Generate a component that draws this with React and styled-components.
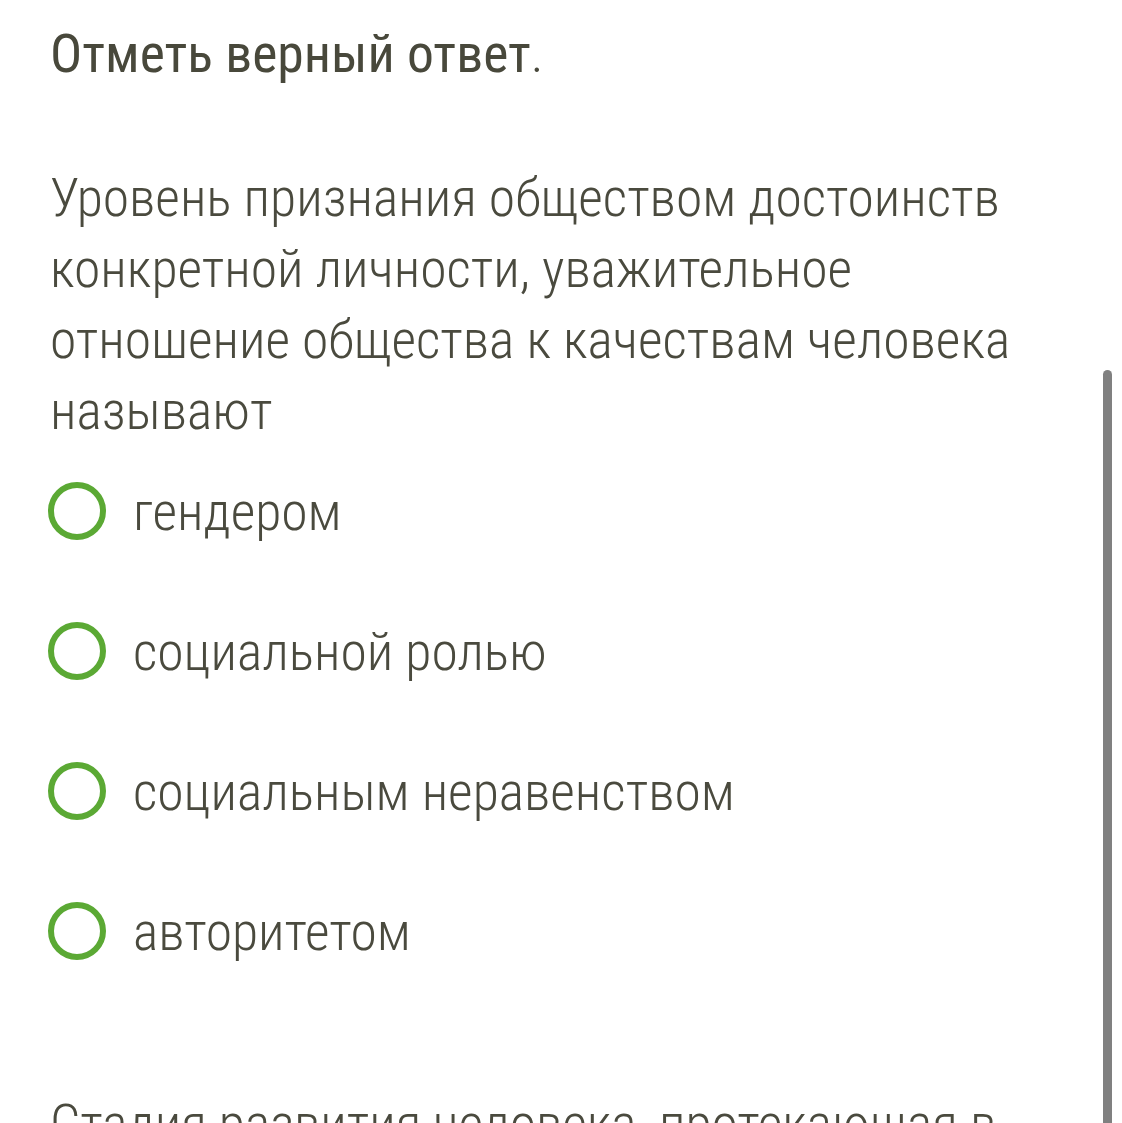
import React from "react";
import styled, { createGlobalStyle } from "styled-components";

const Global = createGlobalStyle`
  html, body { margin: 0; background: #fff; overflow: hidden; }
`;

const Page = styled.div`
  position: relative;
  height: 1123px;
  overflow: hidden;
  font-family: "Roboto Condensed", Roboto, "Liberation Sans", sans-serif;
  color: #4a4a3e;
`;

const Content = styled.div`
  padding: 22px 80px 0 50px;
`;

const Instruction = styled.div`
  font-size: 53.6px;
  line-height: 64px;
  font-weight: 400;
  color: #48483b;
  & span {
    font-weight: 300;
  }
`;

const Question = styled.div`
  margin-top: 76px;
  font-size: 53.6px;
  line-height: 71px;
  font-weight: 300;
`;

const Options = styled.div`
  margin-top: 36px;
  display: flex;
  flex-direction: column;
  gap: 82px;
`;

const Option = styled.label`
  display: flex;
  align-items: center;
  gap: 27px;
  height: 58px;
  font-size: 53.6px;
  font-weight: 300;
`;

const Radio = styled.span`
  flex: none;
  width: 58px;
  height: 58px;
  box-sizing: border-box;
  border-radius: 50%;
  border: 6px solid #5ba934;
  margin-left: -2px;
`;

const Next = styled.div`
  margin-top: 128px;
  font-size: 53.6px;
  line-height: 71px;
  font-weight: 300;
  white-space: nowrap;
`;

const Scrollbar = styled.div`
  position: absolute;
  left: 1103px;
  top: 370px;
  width: 9px;
  bottom: 0;
  background: #808080;
  border-radius: 5px 5px 0 0;
`;

const answers = ["гендером", "социальной ролью", "социальным неравенством", "авторитетом"];

export default function App() {
  return (
    <Page>
      <Global />
      <Content>
        <Instruction>
          Отметь верный ответ<span>.</span>
        </Instruction>
        <Question>
          Уровень признания обществом достоинств конкретной личности, уважительное
          отношение общества к качествам человека называют
        </Question>
        <Options>
          {answers.map((a) => (
            <Option key={a}>
              <Radio />
              {a}
            </Option>
          ))}
        </Options>
        <Next>Стадия развития человека, протекающая в</Next>
      </Content>
      <Scrollbar />
    </Page>
  );
}
